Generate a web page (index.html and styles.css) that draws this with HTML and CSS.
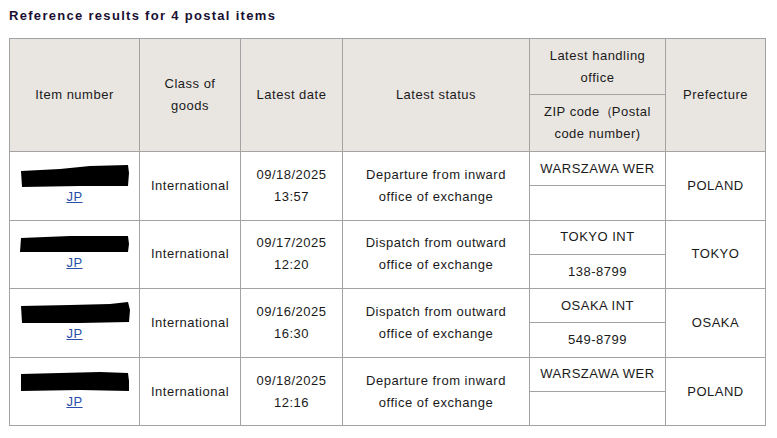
FILE: index.html
```html
<!DOCTYPE html>
<html>
<head>
<meta charset="utf-8">
<link rel="stylesheet" href="styles.css">
</head>
<body>
<h1 class="title">Reference results for 4 postal items</h1>
<table class="results">
  <colgroup>
    <col class="c1"><col class="c2"><col class="c3"><col class="c4"><col class="c5"><col class="c6">
  </colgroup>
  <tr class="h1">
    <th rowspan="2">Item number</th>
    <th rowspan="2">Class of<br>goods</th>
    <th rowspan="2">Latest date</th>
    <th rowspan="2">Latest status</th>
    <th>Latest handling<br>office</th>
    <th rowspan="2">Prefecture</th>
  </tr>
  <tr class="h2">
    <th>ZIP code<span class="paren">（</span>Postal<br>code number)</th>
  </tr>

  <tr class="r">
    <td rowspan="2"><div class="redact"><svg width="110" height="22" viewBox="0 0 110 22"><path d="M1 6 L40 4 L70 1 L108 0 L109 8 L108 21 L60 21 L2 22 Z" fill="#000"/></svg></div><a href="#" class="jp">JP</a></td>
    <td rowspan="2">International</td>
    <td rowspan="2">09/18/2025<br>13:57</td>
    <td rowspan="2">Departure from inward<br>office of exchange</td>
    <td class="sub">WARSZAWA WER</td>
    <td rowspan="2">POLAND</td>
  </tr>
  <tr class="r"><td class="sub"></td></tr>

  <tr class="r">
    <td rowspan="2"><div class="redact"><svg width="110" height="18" viewBox="0 0 110 18"><path d="M1 3 L50 1 L108 1 L109 9 L108 17 L60 17 L0 17 Z" fill="#000"/></svg></div><a href="#" class="jp">JP</a></td>
    <td rowspan="2">International</td>
    <td rowspan="2">09/17/2025<br>12:20</td>
    <td rowspan="2">Dispatch from outward<br>office of exchange</td>
    <td class="sub">TOKYO INT</td>
    <td rowspan="2">TOKYO</td>
  </tr>
  <tr class="r"><td class="sub">138-8799</td></tr>

  <tr class="r">
    <td rowspan="2"><div class="redact"><svg width="110" height="22" viewBox="0 0 110 22"><path d="M1 4 L50 3 L90 2 L108 0 L110 8 L109 20 L60 21 L2 21 Z" fill="#000"/></svg></div><a href="#" class="jp">JP</a></td>
    <td rowspan="2">International</td>
    <td rowspan="2">09/16/2025<br>16:30</td>
    <td rowspan="2">Dispatch from outward<br>office of exchange</td>
    <td class="sub">OSAKA INT</td>
    <td rowspan="2">OSAKA</td>
  </tr>
  <tr class="r"><td class="sub">549-8799</td></tr>

  <tr class="r">
    <td rowspan="2"><div class="redact"><svg width="110" height="21" viewBox="0 0 110 21"><path d="M1 3 L40 2 L80 1 L108 2 L109 10 L109 20 L60 19 L1 20 Z" fill="#000"/></svg></div><a href="#" class="jp">JP</a></td>
    <td rowspan="2">International</td>
    <td rowspan="2">09/18/2025<br>12:16</td>
    <td rowspan="2">Departure from inward<br>office of exchange</td>
    <td class="sub">WARSZAWA WER</td>
    <td rowspan="2">POLAND</td>
  </tr>
  <tr class="r"><td class="sub"></td></tr>
</table>
</body>
</html>
```

FILE: styles.css
```css
html, body {
  margin: 0;
  padding: 0;
  background: #ffffff;
}
body {
  padding: 6px 0 0 9px;
  font-family: "Liberation Sans", Arial, sans-serif;
  font-size: 13px;
  color: #1a1a1a;
}
.title {
  margin: 0 0 12px 0;
  font-size: 13px;
  line-height: 20px;
  font-weight: bold;
  color: #1a1033;
  letter-spacing: 1.3px;
}
.results {
  border-collapse: collapse;
  table-layout: fixed;
  width: 756px;
}
.c1 { width: 130px; }
.c2 { width: 101px; }
.c3 { width: 102px; }
.c4 { width: 187px; }
.c5 { width: 136px; }
.c6 { width: 100px; }
.results th, .results td {
  border: 1px solid #a3a3a3;
  text-align: center;
  vertical-align: middle;
  line-height: 22px;
  padding: 0 2px;
  letter-spacing: 0.5px;
  font-weight: normal;
}
.results th {
  background: #e9e5e1;
  color: #1a1a1a;
}
.paren {
  letter-spacing: -1px;
}
.h1 th { height: 55px; }
.h2 th { height: 56px; }
.r td { height: 33.3px; }
.redact {
  display: flex;
  justify-content: center;
  line-height: 0;
}
.jp {
  display: block;
  color: #2a4eaa;
  text-decoration: underline;
  line-height: 20px;
}
```
